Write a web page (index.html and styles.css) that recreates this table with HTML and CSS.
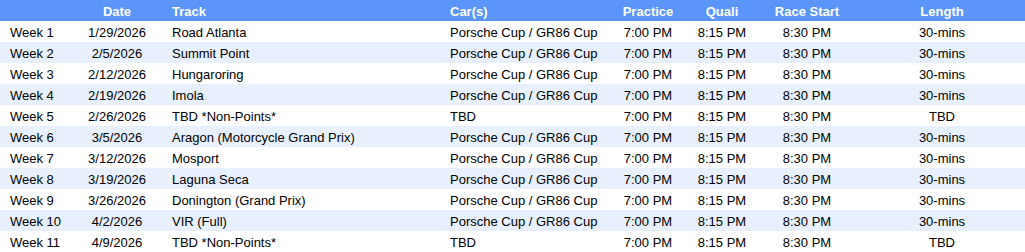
FILE: index.html
```html
<!DOCTYPE html>
<html>
<head>
<meta charset="utf-8">
<link rel="stylesheet" href="styles.css">
</head>
<body>
<table class="sched">
  <colgroup>
    <col class="c-week"><col class="c-date"><col class="c-track"><col class="c-car">
    <col class="c-prac"><col class="c-quali"><col class="c-race"><col class="c-len">
  </colgroup>
  <thead>
    <tr><th></th><th class="ctr">Date</th><th class="lft">Track</th><th class="lft">Car(s)</th><th class="ctr">Practice</th><th class="ctr">Quali</th><th class="ctr">Race Start</th><th class="ctr len">Length</th></tr>
  </thead>
  <tbody>
    <tr><td class="wk">Week 1</td><td class="ctr">1/29/2026</td><td class="lft">Road Atlanta</td><td class="lft">Porsche Cup / GR86 Cup</td><td class="ctr">7:00 PM</td><td class="ctr">8:15 PM</td><td class="ctr">8:30 PM</td><td class="ctr len">30-mins</td></tr>
    <tr><td class="wk">Week 2</td><td class="ctr">2/5/2026</td><td class="lft">Summit Point</td><td class="lft">Porsche Cup / GR86 Cup</td><td class="ctr">7:00 PM</td><td class="ctr">8:15 PM</td><td class="ctr">8:30 PM</td><td class="ctr len">30-mins</td></tr>
    <tr><td class="wk">Week 3</td><td class="ctr">2/12/2026</td><td class="lft">Hungaroring</td><td class="lft">Porsche Cup / GR86 Cup</td><td class="ctr">7:00 PM</td><td class="ctr">8:15 PM</td><td class="ctr">8:30 PM</td><td class="ctr len">30-mins</td></tr>
    <tr><td class="wk">Week 4</td><td class="ctr">2/19/2026</td><td class="lft">Imola</td><td class="lft">Porsche Cup / GR86 Cup</td><td class="ctr">7:00 PM</td><td class="ctr">8:15 PM</td><td class="ctr">8:30 PM</td><td class="ctr len">30-mins</td></tr>
    <tr><td class="wk">Week 5</td><td class="ctr">2/26/2026</td><td class="lft">TBD *Non-Points*</td><td class="lft">TBD</td><td class="ctr">7:00 PM</td><td class="ctr">8:15 PM</td><td class="ctr">8:30 PM</td><td class="ctr len">TBD</td></tr>
    <tr><td class="wk">Week 6</td><td class="ctr">3/5/2026</td><td class="lft">Aragon (Motorcycle Grand Prix)</td><td class="lft">Porsche Cup / GR86 Cup</td><td class="ctr">7:00 PM</td><td class="ctr">8:15 PM</td><td class="ctr">8:30 PM</td><td class="ctr len">30-mins</td></tr>
    <tr><td class="wk">Week 7</td><td class="ctr">3/12/2026</td><td class="lft">Mosport</td><td class="lft">Porsche Cup / GR86 Cup</td><td class="ctr">7:00 PM</td><td class="ctr">8:15 PM</td><td class="ctr">8:30 PM</td><td class="ctr len">30-mins</td></tr>
    <tr><td class="wk">Week 8</td><td class="ctr">3/19/2026</td><td class="lft">Laguna Seca</td><td class="lft">Porsche Cup / GR86 Cup</td><td class="ctr">7:00 PM</td><td class="ctr">8:15 PM</td><td class="ctr">8:30 PM</td><td class="ctr len">30-mins</td></tr>
    <tr><td class="wk">Week 9</td><td class="ctr">3/26/2026</td><td class="lft">Donington (Grand Prix)</td><td class="lft">Porsche Cup / GR86 Cup</td><td class="ctr">7:00 PM</td><td class="ctr">8:15 PM</td><td class="ctr">8:30 PM</td><td class="ctr len">30-mins</td></tr>
    <tr><td class="wk">Week 10</td><td class="ctr">4/2/2026</td><td class="lft">VIR (Full)</td><td class="lft">Porsche Cup / GR86 Cup</td><td class="ctr">7:00 PM</td><td class="ctr">8:15 PM</td><td class="ctr">8:30 PM</td><td class="ctr len">30-mins</td></tr>
    <tr><td class="wk">Week 11</td><td class="ctr">4/9/2026</td><td class="lft">TBD *Non-Points*</td><td class="lft">TBD</td><td class="ctr">7:00 PM</td><td class="ctr">8:15 PM</td><td class="ctr">8:30 PM</td><td class="ctr len">TBD</td></tr>
  </tbody>
</table>
</body>
</html>
```
FILE: styles.css
```css
html, body {
  margin: 0;
  padding: 0;
  background: #ffffff;
}
.sched {
  border-collapse: collapse;
  table-layout: fixed;
  width: 1025px;
  font-family: "Liberation Sans", Arial, sans-serif;
  font-size: 13px;
  color: #000000;
}
.c-week { width: 70px; }
.c-date { width: 94px; }
.c-track { width: 278px; }
.c-car { width: 168px; }
.c-prac { width: 76px; }
.c-quali { width: 72px; }
.c-race { width: 98px; }
.c-len { width: 169px; }
.sched th, .sched td {
  height: 21px;
  box-sizing: border-box;
  padding: 2px 0 0 0;
  line-height: 19px;
  white-space: nowrap;
  overflow: hidden;
  vertical-align: top;
}
.sched thead th {
  background: #5b95f9;
  color: #ffffff;
  font-weight: bold;
}
.sched tbody tr:nth-child(even) td {
  background: #e8f0fe;
}
.wk { padding-left: 10px !important; text-align: left; }
.ctr { text-align: center; }
.lft { text-align: left; padding-left: 8px !important; }
.len { padding-left: 3px !important; }
```
